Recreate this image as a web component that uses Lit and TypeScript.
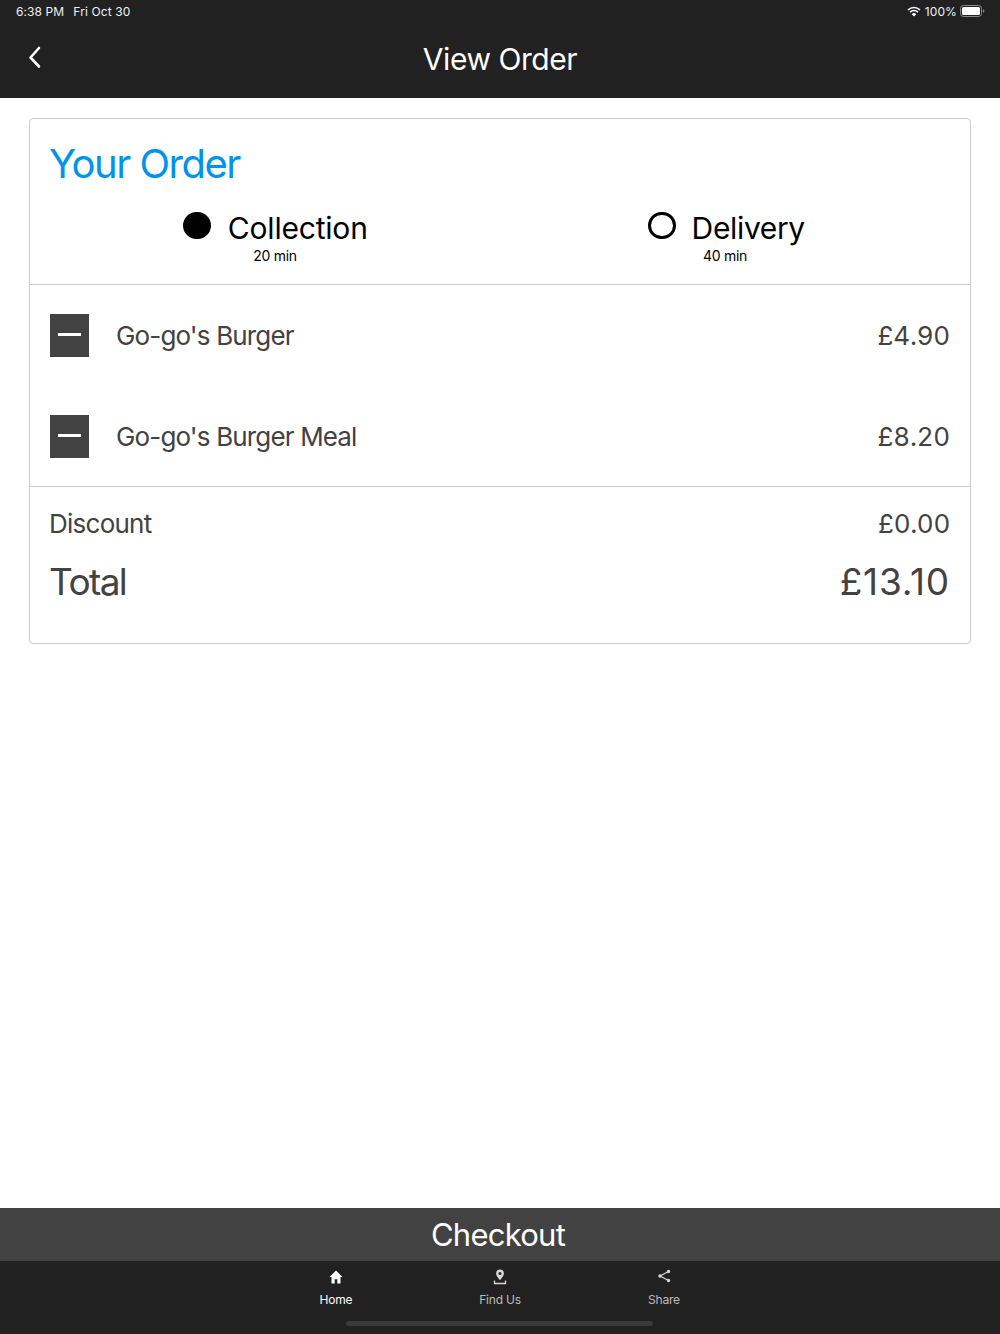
import { LitElement, html, css } from "lit";
import { customElement } from "lit/decorators.js";

@customElement("app-root")
export class AppRoot extends LitElement {
  static styles = css`
    :host { display: flex; flex-direction: column; width: 1000px; height: 1334px; background: #fff; font-family: Inter, "Liberation Sans", sans-serif; color: #424242; overflow: hidden; }
    header { height: 98px; background: #212121; color: #fff; box-sizing: border-box; display: flex; flex-direction: column; flex: none; }
    .status { height: 24px; display: flex; align-items: center; padding: 0 15px 2px 16px; box-sizing: border-box; font-size: 12px; letter-spacing: 0.1px; color: #f0f0f0; }
    .status .date { margin-left: 9px; }
    .status .right { margin-left: auto; display: flex; align-items: center; gap: 4px; }
    .status .batt { margin-left: -1px; }
    .nav-bar { flex: 1; display: flex; align-items: center; justify-content: center; position: relative; padding-bottom: 4px; }
    .title { font-size: 30px; letter-spacing: -0.45px; }
    .back { position: absolute; left: 27px; top: 21px; }
    main { flex: 1; padding: 19.5px 29px 0; }
    .card { border: 1px solid #ccc; border-radius: 4px; height: 526.500px; box-sizing: border-box; display: flex; flex-direction: column; }
    .head { height: 166.500px; box-sizing: border-box; border-bottom: 1px solid #ccc; padding: 19px 20px 0; flex: none; }
    h1 { margin: 0 0 0 -1px; font-weight: 400; font-size: 40px; line-height: 52px; letter-spacing: -1.5px; color: #0094e8; }
    .options { display: grid; grid-template-columns: 1fr 1fr; margin-top: 20px; }
    .option { display: flex; flex-direction: column; align-items: center; color: #000; }
    .option .top { display: flex; align-items: center; gap: 16px; height: 36px; }
    .option.delivery .top { margin-left: 3px; }
    .option.collection .top { gap: 17px; margin-left: 1px; }
    .radio { width: 27.500px; height: 27.500px; box-sizing: border-box; border-radius: 50%; border: 3px solid #000; margin-top: -4px; }
    .radio.on { background: #000; }
    .label { font-size: 30px; letter-spacing: -0.35px; }
    .collection .label { letter-spacing: -0.2px; }
    .sub { font-size: 14px; line-height: 18px; letter-spacing: -0.3px; margin-top: 1px; }
    .items { height: 202px; box-sizing: border-box; border-bottom: 1px solid #ccc; padding: 29px 20px 0; display: flex; flex-direction: column; gap: 58px; flex: none; }
    .item { display: flex; align-items: center; height: 43px; font-size: 26px; letter-spacing: -0.85px; }
    .minus { width: 39px; height: 43px; background: #424242; display: flex; align-items: center; justify-content: center; margin: 0 27.500px 0 -0.500px; padding-bottom: 2px; box-sizing: border-box; flex: none; }
    .minus i { display: block; width: 23px; height: 3px; background: #fff; }
    .price { margin-left: auto; letter-spacing: -0.2px; font-variant-numeric: tabular-nums; }
    .totals { padding: 16px 20px 0; }
    .row { display: flex; justify-content: space-between; align-items: center; }
    .row > :first-child { margin-left: -1px; }
    .discount { font-size: 26px; height: 40px; letter-spacing: -0.75px; }
    .total { font-size: 37px; height: 54px; margin-top: 11px; letter-spacing: -1.6px; }
    .discount .amt { letter-spacing: -0.3px; font-variant-numeric: tabular-nums; }
    .total .amt { letter-spacing: 0.8px; }
    .checkout { height: 53px; background: #424242; color: #fff; display: flex; align-items: center; justify-content: center; font-size: 31px; letter-spacing: -0.75px; padding-right: 4px; box-sizing: border-box; flex: none; }
    nav { height: 73px; background: #212121; flex: none; position: relative; display: grid; grid-template-columns: repeat(3, 164px); justify-content: center; }
    .tab { display: flex; flex-direction: column; align-items: center; color: #bdbdbd; font-size: 12px; letter-spacing: -0.2px; padding-top: 7px; }
    .tab.active { color: #fff; }
    .tab svg { height: 18px; width: 18px; margin-bottom: 6px; }
    .homebar { position: absolute; left: 346px; bottom: 8px; width: 307px; height: 5px; border-radius: 3px; background: #3a3a3a; }
  `;

  render() {
    return html`
      <header>
        <div class="status">
          <span>6:38 PM</span><span class="date">Fri Oct 30</span>
          <div class="right">
            <svg width="14" height="11" viewBox="0 0 14 11"><path d="M1 4a8.600 8.600 0 0 1 12 0M3 6.200a5.600 5.600 0 0 1 8 0" fill="none" stroke="#fff" stroke-width="1.600"/><path d="M7 10.500 4.800 8.200a3.100 3.100 0 0 1 4.400 0z" fill="#fff"/></svg>
            <span>100%</span>
            <svg class="batt" width="25" height="12" viewBox="0 0 25 12"><rect x=".5" y=".5" width="21" height="11" rx="3" fill="none" stroke="#8a8a8a"/><rect x="2" y="2" width="18" height="8" rx="1.600" fill="#fff"/><path d="M23 4.200c.9.300 1.300 1 1.300 1.800s-.4 1.500-1.300 1.800z" fill="#8a8a8a"/></svg>
          </div>
        </div>
        <div class="nav-bar">
          <svg class="back" width="16" height="24" viewBox="0 0 16 24"><path d="M12 3 3.500 12.500 12 21.500" fill="none" stroke="#fff" stroke-width="2.600" stroke-linecap="round" stroke-linejoin="round"/></svg>
          <span class="title">View Order</span>
        </div>
      </header>
      <main>
        <section class="card">
          <div class="head">
            <h1>Your Order</h1>
            <div class="options">
              <div class="option collection">
                <div class="top"><span class="radio on"></span><span class="label">Collection</span></div>
                <span class="sub">20 min</span>
              </div>
              <div class="option delivery">
                <div class="top"><span class="radio"></span><span class="label">Delivery</span></div>
                <span class="sub">40 min</span>
              </div>
            </div>
          </div>
          <div class="items">
            <div class="item"><span class="minus"><i></i></span><span>Go-go's Burger</span><span class="price">£4.90</span></div>
            <div class="item"><span class="minus"><i></i></span><span>Go-go's Burger Meal</span><span class="price">£8.20</span></div>
          </div>
          <div class="totals">
            <div class="row discount"><span>Discount</span><span class="amt">£0.00</span></div>
            <div class="row total"><span>Total</span><span class="amt">£13.10</span></div>
          </div>
        </section>
      </main>
      <div class="checkout">Checkout</div>
      <nav>
        <div class="tab active">
          <svg viewBox="0 0 18 18"><path d="M9 2.500 2.500 9h2v6.500h3.200v-4.300h2.600v4.300h3.200V9h2z" fill="#fff"/></svg>
          <span>Home</span>
        </div>
        <div class="tab">
          <svg viewBox="0 0 18 18"><path fill-rule="evenodd" d="M9 1.500a3.900 3.900 0 0 0-3.900 3.900C5.100 8.200 9 12 9 12s3.900-3.800 3.900-6.600A3.900 3.900 0 0 0 9 1.500zm0 2.500a1.500 1.500 0 1 1 0 3 1.500 1.500 0 0 1 0-3z" fill="#d8d8d8"/><path d="M3.500 12.500v3h11v-3" fill="none" stroke="#d8d8d8" stroke-width="1.300"/></svg>
          <span>Find Us</span>
        </div>
        <div class="tab">
          <svg viewBox="0 0 18 18"><path d="M13.500 3.500 5 8l8.500 4.500" fill="none" stroke="#d8d8d8" stroke-width="1.200"/><circle cx="13.500" cy="3.500" r="1.700" fill="#d8d8d8"/><circle cx="5" cy="8" r="1.700" fill="#d8d8d8"/><circle cx="13.500" cy="12.500" r="1.700" fill="#d8d8d8"/></svg>
          <span>Share</span>
        </div>
        <div class="homebar"></div>
      </nav>
    `;
  }
}
